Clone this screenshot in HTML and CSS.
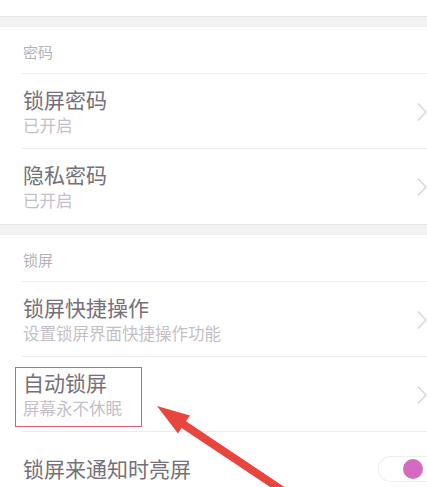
FILE: index.html
```html
<!DOCTYPE html>
<html lang="zh-CN">
<head>
<meta charset="utf-8">
<title>锁屏设置</title>
<link rel="stylesheet" href="styles.css">
</head>
<body>
<div class="page">
  <div class="top"></div>
  <div class="band"></div>

  <div class="section-header"><span>密码</span></div>
  <div class="row">
    <div class="row-text">
      <div class="title">锁屏密码</div>
      <div class="sub">已开启</div>
    </div>
    <svg class="chev" viewBox="0 0 10 20" width="10" height="20"><polyline points="1,1.5 9,10 1,18.5" fill="none" stroke="#d6d3d8" stroke-width="1.3"/></svg>
  </div>
  <div class="row last">
    <div class="row-text">
      <div class="title">隐私密码</div>
      <div class="sub">已开启</div>
    </div>
    <svg class="chev" viewBox="0 0 10 20" width="10" height="20"><polyline points="1,1.5 9,10 1,18.5" fill="none" stroke="#d6d3d8" stroke-width="1.3"/></svg>
  </div>

  <div class="band"></div>

  <div class="section-header"><span>锁屏</span></div>
  <div class="row">
    <div class="row-text">
      <div class="title">锁屏快捷操作</div>
      <div class="sub">设置锁屏界面快捷操作功能</div>
    </div>
    <svg class="chev" viewBox="0 0 10 20" width="10" height="20"><polyline points="1,1.5 9,10 1,18.5" fill="none" stroke="#d6d3d8" stroke-width="1.3"/></svg>
  </div>
  <div class="row">
    <div class="row-text highlight">
      <div class="title">自动锁屏</div>
      <div class="sub">屏幕永不休眠</div>
    </div>
    <svg class="chev" viewBox="0 0 10 20" width="10" height="20"><polyline points="1,1.5 9,10 1,18.5" fill="none" stroke="#d6d3d8" stroke-width="1.3"/></svg>
  </div>
  <div class="row single">
    <div class="row-text">
      <div class="title">锁屏来通知时亮屏</div>
    </div>
    <div class="toggle"><div class="knob"></div></div>
  </div>

  <svg class="arrow" viewBox="0 0 427 487" width="427" height="487">
    <polygon fill="#e8453e" points="157,406 190,415.5 186,421.3 284.4,487 280,493.6 181.6,427.9 178,433.5"/>
  </svg>
</div>
</body>
</html>
```

FILE: styles.css
```css
* { box-sizing: border-box; }
html, body { margin: 0; padding: 0; background: #fff; }
body {
  font-family: "Noto Sans CJK SC", "Noto Sans", sans-serif;
  width: 427px;
  height: 487px;
  overflow: hidden;
}
.page { position: relative; width: 427px; height: 487px; overflow: hidden; }

.top { height: 16px; background: #fff; }
.band {
  height: 11px;
  background: #f2f2f3;
  border-top: 1px solid #e7e7e9;
  border-bottom: 1px solid #ededee;
}

.section-header {
  height: 47px;
  padding: 15px 0 0 23px;
  position: relative;
}
.section-header span {
  display: block;
  font-size: 15px;
  line-height: 20px;
  color: #b5b1b8;
}
.section-header::after {
  content: "";
  position: absolute;
  left: 22px; right: 0; bottom: 0;
  border-bottom: 1px solid #ececec;
}

.row {
  height: 75px;
  display: flex;
  align-items: center;
  justify-content: space-between;
  padding-left: 23px;
  position: relative;
}
.row::after {
  content: "";
  position: absolute;
  left: 22px; right: 0; bottom: 0;
  border-bottom: 1px solid #ececec;
}
.row.last::after { display: none; }
.row.single { height: 76px; padding-bottom: 4px; }
.row.single::after { display: none; }

.row-text { position: relative; }
.title {
  font-size: 21px;
  line-height: 26px;
  color: #757079;
}
.sub {
  font-size: 16.5px;
  line-height: 24px;
  color: #c4bfc7;
  margin-top: 1px;
}
.highlight::after {
  content: "";
  position: absolute;
  left: -8px; right: -20px; top: -2px; bottom: -7px;
  border: 1.5px solid #d9626c;
}

.chev { flex: none; display: block; }

.toggle {
  flex: none;
  width: 49px;
  height: 26px;
  border-radius: 13px 0 0 13px;
  border: 1px solid #efeef0;
  border-right: none;
  background: #fff;
  display: flex;
  align-items: center;
  justify-content: flex-end;
  padding-right: 4px;
  margin-top: 2px;
}
.knob {
  width: 20px;
  height: 20px;
  border-radius: 50%;
  background: #d46bbf;
}

.arrow {
  position: absolute;
  left: 0; top: 0;
  pointer-events: none;
}
```
